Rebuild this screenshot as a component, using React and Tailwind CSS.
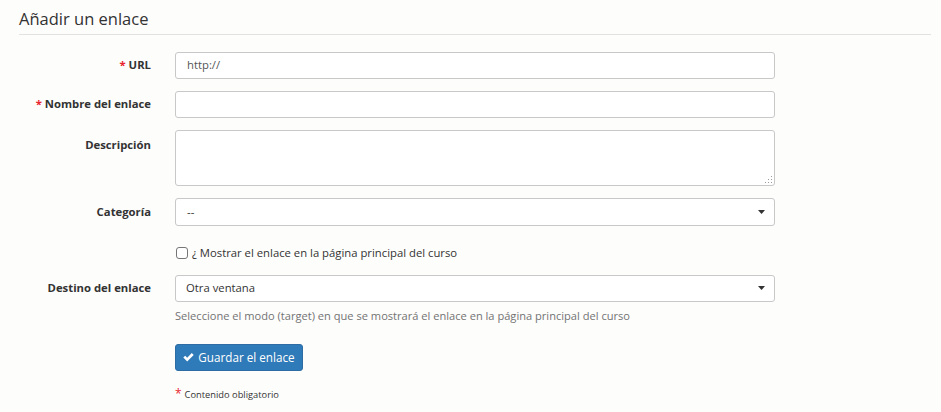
import React from "react";

const font = { fontFamily: '"Open Sans", "Noto Sans", sans-serif' };

function Caret() {
  return (
    <svg width="7" height="4" viewBox="0 0 7 4" className="absolute right-[9px] top-1/2 -translate-y-1/2">
      <path d="M0 0 L7 0 L3.5 4 Z" fill="#333" />
    </svg>
  );
}

function Label({ req, children, top }) {
  return (
    <div className={`w-[156px] shrink-0 pr-[24px] text-right text-[11.3px] font-bold text-[#333] ${top ? "pt-[7px]" : "self-center"}`}>
      {req && <span className="text-[#e8252f] mr-[3px]">*</span>}
      {children}
    </div>
  );
}

export default function App() {
  return (
    <div className="min-h-[412px] w-[941px] bg-[#fdfdfc] text-[#333]" style={font}>
      <div className="pl-[19px] pr-[10px] pt-[7px]">
        <h2 className="text-[16.5px] leading-[24px] text-[#333] pb-[3px] border-b border-[#e2e2e2]">Añadir un enlace</h2>

        <div className="mt-[17px] flex flex-col">
          <div className="flex">
            <Label req>URL</Label>
            <div className="h-[27px] w-[600px] rounded-[3px] border border-[#c8c8c8] bg-white px-[11px] flex items-center text-[11.3px] text-[#555]">http://</div>
          </div>

          <div className="flex mt-[12px]">
            <Label req>Nombre del enlace</Label>
            <div className="h-[27px] w-[600px] rounded-[3px] border border-[#c8c8c8] bg-white" />
          </div>

          <div className="flex mt-[12px]">
            <Label top>Descripción</Label>
            <div className="relative h-[56px] w-[600px] rounded-[3px] border border-[#c8c8c8] bg-white">
              <svg width="8" height="8" viewBox="0 0 8 8" className="absolute right-[1px] bottom-[1px]">
                <g fill="#9a9a9a">
                  <rect x="6" y="0" width="1" height="1" />
                  <rect x="3" y="3" width="1" height="1" />
                  <rect x="6" y="3" width="1" height="1" />
                  <rect x="0" y="6" width="1" height="1" />
                  <rect x="3" y="6" width="1" height="1" />
                  <rect x="6" y="6" width="1" height="1" />
                </g>
              </svg>
            </div>
          </div>

          <div className="flex mt-[12px]">
            <Label>Categoría</Label>
            <div className="relative h-[28px] w-[600px] rounded-[3px] border border-[#c8c8c8] bg-white px-[11px] flex items-center text-[11.3px] text-[#333]">
              --
              <Caret />
            </div>
          </div>

          <div className="flex mt-[19px]">
            <div className="w-[157px] shrink-0" />
            <div className="flex items-center text-[11.3px] text-[#333]">
              <span className="inline-block h-[12px] w-[12px] rounded-[3px] border border-[#767676] bg-white mr-[4px]" />
              ¿ Mostrar el enlace en la página principal del curso
            </div>
          </div>

          <div className="flex mt-[13px]">
            <Label>Destino del enlace</Label>
            <div className="relative h-[27px] w-[600px] rounded-[3px] border border-[#c8c8c8] bg-white px-[10px] flex items-center text-[11.3px] text-[#333]">
              Otra ventana
              <Caret />
            </div>
          </div>

          <div className="flex mt-[6px]">
            <div className="w-[156px] shrink-0" />
            <div className="text-[11.1px] text-[#737373] leading-[16px]">Seleccione el modo (target) en que se mostrará el enlace en la página principal del curso</div>
          </div>

          <div className="flex mt-[20px]">
            <div className="w-[156px] shrink-0" />
            <button className="h-[27px] w-[128px] rounded-[3px] bg-[#2f7ab8] text-white text-[11.7px] flex items-center justify-center gap-[4px] border border-[#2e6da4]">
              <svg width="11" height="9" viewBox="0 0 11 9">
                <path d="M0.3 4.6 L2.2 2.7 L4.2 4.7 L8.8 0.1 L10.7 2 L4.2 8.5 Z" fill="white" />
              </svg>
              Guardar el enlace
            </button>
          </div>

          <div className="flex mt-[14px]">
            <div className="w-[156px] shrink-0" />
            <div className="text-[9.3px] text-[#333]">
              <span className="text-[#e8252f] text-[12px] mr-[3px]">*</span>Contenido obligatorio
            </div>
          </div>
        </div>
      </div>
    </div>
  );
}
